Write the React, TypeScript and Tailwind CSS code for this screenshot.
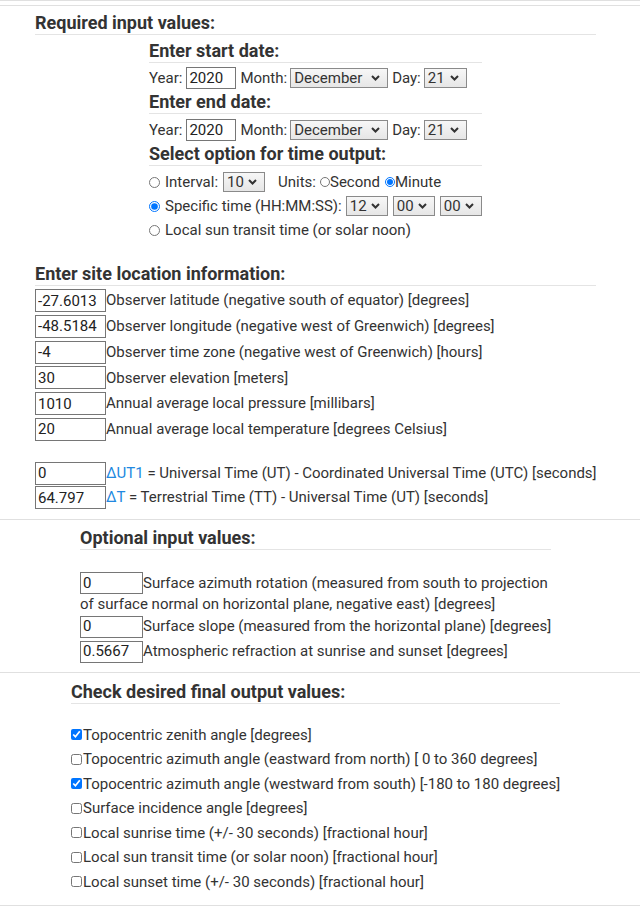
import React from "react";

type Field = { value: string; label: React.ReactNode };

const siteFields: Field[] = [
  { value: "-27.6013", label: "Observer latitude (negative south of equator) [degrees]" },
  { value: "-48.5184", label: "Observer longitude (negative west of Greenwich) [degrees]" },
  { value: "-4", label: "Observer time zone (negative west of Greenwich) [hours]" },
  { value: "30", label: "Observer elevation [meters]" },
  { value: "1010", label: "Annual average local pressure [millibars]" },
  { value: "20", label: "Annual average local temperature [degrees Celsius]" },
];

const outputs = [
  { label: "Topocentric zenith angle [degrees]", checked: true },
  { label: "Topocentric azimuth angle (eastward from north) [ 0 to 360 degrees]", checked: false },
  { label: "Topocentric azimuth angle (westward from south) [-180 to 180 degrees]", checked: true },
  { label: "Surface incidence angle [degrees]", checked: false },
  { label: "Local sunrise time (+/- 30 seconds) [fractional hour]", checked: false },
  { label: "Local sun transit time (or solar noon) [fractional hour]", checked: false },
  { label: "Local sunset time (+/- 30 seconds) [fractional hour]", checked: false },
];

function Heading({ children, className = "" }: { children: React.ReactNode; className?: string }) {
  return (
    <div className={`border-b border-[#e4e4e4] text-[18px] font-bold leading-[22px] text-[#333] ${className}`}>
      {children}
    </div>
  );
}

function Chevron() {
  return (
    <svg width="9" height="6" viewBox="0 0 9 6" className="shrink-0">
      <path d="M1 1 L4.5 4.5 L8 1" fill="none" stroke="#333" strokeWidth="2" />
    </svg>
  );
}

// fake native select, old chrome look
function Select({ value, className = "" }: { value: string; className?: string }) {
  return (
    <span
      className={`inline-flex h-[20px] shrink-0 items-center justify-between border border-[#8a8a8a] bg-linear-to-b from-[#f7f7f7] to-[#e6e6e6] pl-[3px] pr-[7px] leading-[18px] ${className}`}
    >
      <span>{value}</span>
      <Chevron />
    </span>
  );
}

function TextBox({ value, className = "" }: { value: string; className?: string }) {
  return (
    <input
      readOnly
      value={value}
      className={`box-border shrink-0 border border-[#767676] bg-white px-[2px] text-[15px] text-[#222] outline-none ${className}`}
    />
  );
}

function Line() {
  return <div className="h-px w-full bg-[#e0e0e0]" />;
}

export default function App() {
  return (
    <div className="w-[640px] overflow-hidden bg-white font-['Roboto','Liberation_Sans',sans-serif] text-[15px] text-[#333]">
      <Line />
      <div className="mt-[4px]">
        <Line />
      </div>

      <div className="w-[631px]">
        {/* Required */}
        <div className="mx-auto mt-[6px] w-[561px]">
          <Heading>Required input values:</Heading>

          <div className="mx-auto mt-[5px] w-[333px]">
            <Heading>Enter start date:</Heading>
            <div className="mt-[3px] flex h-[24px] items-center whitespace-nowrap">
              <span>Year:</span>
              <TextBox value="2020" className="ml-[4px] h-[22px] w-[50px]" />
              <span className="ml-[4px]">Month:</span>
              <Select value="December" className="ml-[3px] w-[98px]" />
              <span className="ml-[4px]">Day:</span>
              <Select value="21" className="ml-[3px] w-[43px]" />
            </div>

            <Heading className="mt-[1px]">Enter end date:</Heading>
            <div className="mt-[4px] flex h-[24px] items-center whitespace-nowrap">
              <span>Year:</span>
              <TextBox value="2020" className="ml-[4px] h-[22px] w-[50px]" />
              <span className="ml-[4px]">Month:</span>
              <Select value="December" className="ml-[3px] w-[98px]" />
              <span className="ml-[4px]">Day:</span>
              <Select value="21" className="ml-[3px] w-[43px]" />
            </div>

            <Heading className="mt-[1px]">Select option for time output:</Heading>
            <div className="mt-[4px] whitespace-nowrap">
              <div className="flex h-[24px] items-center">
                <input type="radio" name="timeopt" className="m-0 h-[11px] w-[11px] shrink-0" />
                <span className="ml-[5px]">Interval:</span>
                <Select value="10" className="ml-[5px] w-[42px]" />
                <span className="ml-[13px]">Units:</span>
                <input type="radio" name="units" className="m-0 ml-[4px] h-[10px] w-[10px] shrink-0" />
                <span>Second</span>
                <input type="radio" name="units" defaultChecked className="m-0 ml-[5px] h-[10px] w-[10px] shrink-0" />
                <span>Minute</span>
              </div>
              <div className="flex h-[24px] items-center">
                <input type="radio" name="timeopt" defaultChecked className="m-0 h-[11px] w-[11px] shrink-0" />
                <span className="ml-[5px]">Specific time (HH:MM:SS):</span>
                <Select value="12" className="ml-[4px] w-[42px]" />
                <Select value="00" className="ml-[5px] w-[42px]" />
                <Select value="00" className="ml-[5px] w-[42px]" />
              </div>
              <div className="flex h-[24px] items-center">
                <input type="radio" name="timeopt" className="m-0 h-[11px] w-[11px] shrink-0" />
                <span className="ml-[5px]">Local sun transit time (or solar noon)</span>
              </div>
            </div>
          </div>

          {/* Site location */}
          <Heading className="mt-[21px]">Enter site location information:</Heading>
          <div className="mt-[3px] whitespace-nowrap">
            {siteFields.map((f) => (
              <div key={f.value} className="mb-[2.75px] flex h-[23px] items-center">
                <TextBox value={f.value} className="h-[23px] w-[71px]" />
                <span>{f.label}</span>
              </div>
            ))}
            <div className="h-[18px]" />
            <div className="mb-[1.5px] flex h-[23px] items-center">
              <TextBox value="0" className="h-[23px] w-[71px]" />
              <span>
                <span className="text-[#2188e0]">ΔUT1</span> = Universal Time (UT) - Coordinated Universal Time (UTC) [seconds]
              </span>
            </div>
            <div className="flex h-[23px] items-center">
              <TextBox value="64.797" className="h-[23px] w-[71px]" />
              <span>
                <span className="text-[#2188e0]">ΔT</span> = Terrestrial Time (TT) - Universal Time (UT) [seconds]
              </span>
            </div>
          </div>
        </div>
      </div>

      <div className="mt-[10px]">
        <Line />
      </div>

      <div className="w-[631px]">
        {/* Optional */}
        <div className="mx-auto mt-[7px] w-[471px]">
          <Heading>Optional input values:</Heading>
          <div className="mt-[22px] whitespace-nowrap">
            <div className="flex h-[22px] items-center">
              <TextBox value="0" className="h-[22px] w-[63px]" />
              <span>Surface azimuth rotation (measured from south to projection</span>
            </div>
            <div className="h-[21.5px] leading-[21.5px]">
              of surface normal on horizontal plane, negative east) [degrees]
            </div>
            <div className="mb-[3px] flex h-[22px] items-center">
              <TextBox value="0" className="h-[22px] w-[63px]" />
              <span>Surface slope (measured from the horizontal plane) [degrees]</span>
            </div>
            <div className="flex h-[22px] items-center">
              <TextBox value="0.5667" className="h-[22px] w-[63px]" />
              <span>Atmospheric refraction at sunrise and sunset [degrees]</span>
            </div>
          </div>
        </div>
      </div>

      <div className="mt-[9.5px]">
        <Line />
      </div>

      <div className="w-[631px]">
        {/* Outputs */}
        <div className="mx-auto mt-[8px] w-[489px]">
          <Heading>Check desired final output values:</Heading>
          <div className="mt-[18.5px] whitespace-nowrap">
            {outputs.map((o) => (
              <label key={o.label} className="flex h-[24.5px] items-center">
                <input type="checkbox" defaultChecked={o.checked} className="m-0 mr-[1px] h-[11px] w-[11px] shrink-0" />
                <span>{o.label}</span>
              </label>
            ))}
          </div>
        </div>
      </div>

      <div className="mt-[11px]">
        <Line />
      </div>
    </div>
  );
}
